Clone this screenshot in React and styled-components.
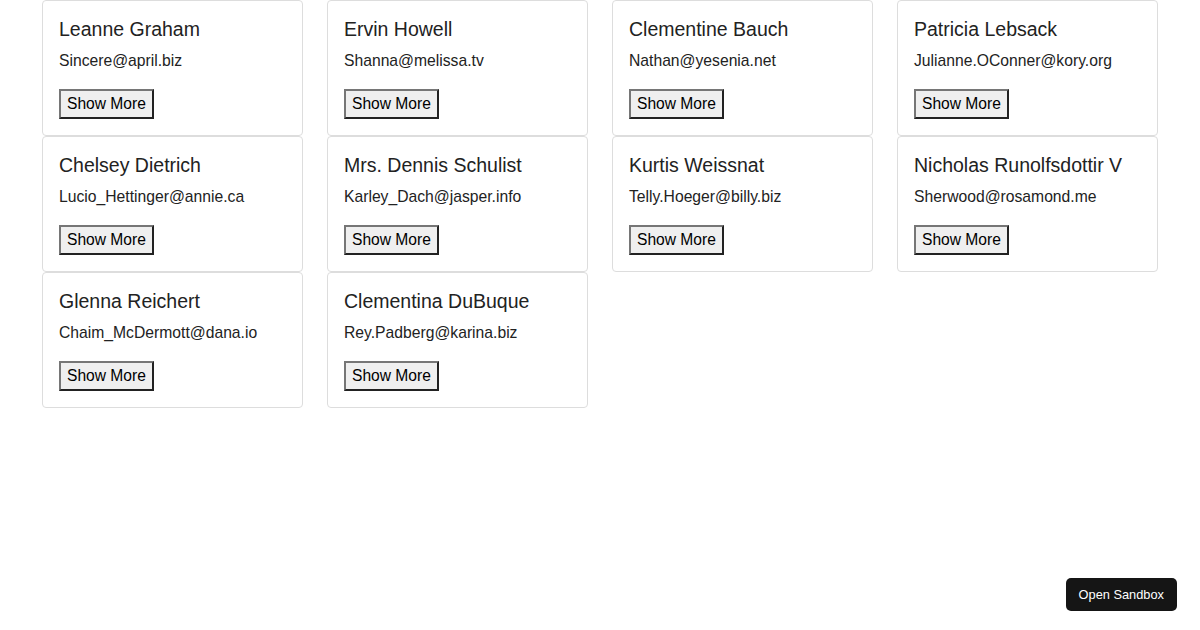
import React from "react";
import styled, { createGlobalStyle } from "styled-components";

const GlobalStyle = createGlobalStyle`
  body {
    margin: 0;
    background: #fff;
    font-family: "Liberation Sans", Arial, sans-serif;
  }
`;

// Grid of user cards
const UserGrid = styled.div`
  display: grid;
  grid-template-columns: repeat(4, 261px);
  column-gap: 24px;
  row-gap: 0;
  width: 1116px;
  margin: 0 auto;
`;

const Card = styled.div`
  box-sizing: border-box;
  height: 136px;
  padding: 16px;
  border: 1px solid #dddddd;
  border-radius: 4px;
  background: #fff;
`;

const Name = styled.div`
  font-size: 19.5px;
  line-height: 24px;
  color: #222;
`;

const Email = styled.div`
  margin-top: 11px;
  font-size: 15.7px;
  line-height: 18px;
  color: #222;
`;

const MoreButton = styled.button`
  margin-top: 19px;
  height: 30px;
  padding: 0 6px;
  font-family: "Liberation Sans", Arial, sans-serif;
  font-size: 15.6px;
  color: #000;
  background: #efefef;
  border: 2px solid;
  border-color: #767676 #222 #222 #767676;
  border-radius: 0;
  cursor: pointer;
`;

const SandboxButton = styled.button`
  position: fixed;
  right: 23px;
  bottom: 19px;
  height: 33px;
  padding: 0 13px;
  background: #151515;
  color: #fff;
  border: none;
  border-radius: 5px;
  font-family: "Liberation Sans", Arial, sans-serif;
  font-size: 12.8px;
`;

const users = [
  { id: 1, name: "Leanne Graham", email: "Sincere@april.biz" },
  { id: 2, name: "Ervin Howell", email: "Shanna@melissa.tv" },
  { id: 3, name: "Clementine Bauch", email: "Nathan@yesenia.net" },
  { id: 4, name: "Patricia Lebsack", email: "Julianne.OConner@kory.org" },
  { id: 5, name: "Chelsey Dietrich", email: "Lucio_Hettinger@annie.ca" },
  { id: 6, name: "Mrs. Dennis Schulist", email: "Karley_Dach@jasper.info" },
  { id: 7, name: "Kurtis Weissnat", email: "Telly.Hoeger@billy.biz" },
  { id: 8, name: "Nicholas Runolfsdottir V", email: "Sherwood@rosamond.me" },
  { id: 9, name: "Glenna Reichert", email: "Chaim_McDermott@dana.io" },
  { id: 10, name: "Clementina DuBuque", email: "Rey.Padberg@karina.biz" },
];

const App = () => {
  return (
    <>
      <GlobalStyle />
      <UserGrid>
        {users.map((user) => (
          <Card key={user.id}>
            <Name>{user.name}</Name>
            <Email>{user.email}</Email>
            <MoreButton>Show More</MoreButton>
          </Card>
        ))}
      </UserGrid>
      <SandboxButton>Open Sandbox</SandboxButton>
    </>
  );
};

export default App;
